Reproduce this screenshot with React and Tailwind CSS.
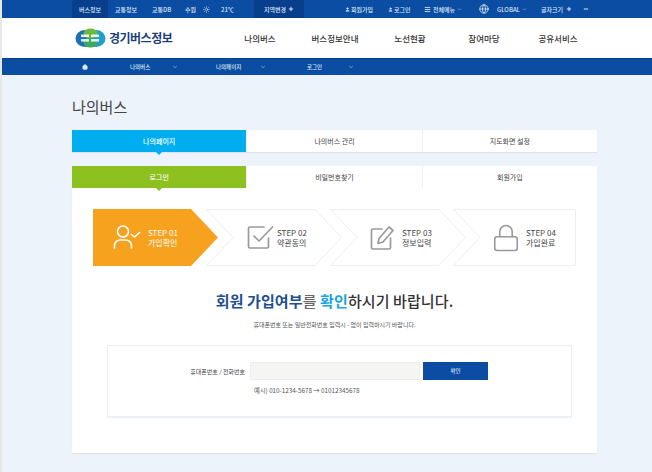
// Gyeonggi bus info - member check page (step 1 of signup)
import { Home, ChevronDown, Sun, User, Lock, Menu, Globe, Plus, Minus } from "lucide-react";

const font = "font-['Noto_Sans_CJK_KR','Noto_Sans',sans-serif]";

const Logo = () => (
  <svg width="31" height="20" viewBox="0 0 31 20" className="shrink-0">
    <ellipse cx="10" cy="10.5" rx="9.5" ry="8.5" fill="#1d6fb5" />
    <ellipse cx="21" cy="10.5" rx="9.5" ry="8.5" fill="#1f9fc9" />
    <ellipse cx="15.5" cy="5.5" rx="7" ry="5" fill="#6fb83f" />
    <ellipse cx="15.5" cy="15" rx="7" ry="4.5" fill="#3aa85e" />
    <rect x="6" y="6.5" width="8" height="2.6" fill="#fff" opacity="0.85" />
    <rect x="16" y="6.5" width="8" height="2.6" fill="#fff" opacity="0.85" />
    <rect x="6" y="11" width="8" height="2.6" fill="#fff" opacity="0.85" />
    <rect x="16" y="11" width="8" height="2.6" fill="#fff" opacity="0.85" />
  </svg>
);

const UserCheck = () => (
  <svg width="28" height="27" viewBox="0 0 28 27" fill="none" stroke="#fff" strokeWidth="1.6" strokeLinecap="round" strokeLinejoin="round">
    <circle cx="10" cy="7.5" r="5.5" />
    <path d="M1.5 24v-2.5c0-3.5 3-5.5 6-5.5h5c3 0 6 2 6 5.5V24" />
    <path d="M18.5 10.5l3 2.5 5-4.5" />
  </svg>
);

const BoxCheck = () => (
  <svg width="27" height="25" viewBox="0 0 27 25" fill="none" stroke="#9a9a9a" strokeWidth="1.7" strokeLinecap="round" strokeLinejoin="round">
    <path d="M17 2H3a1.5 1.5 0 0 0-1.5 1.5v18A1.5 1.5 0 0 0 3 23h17a1.5 1.5 0 0 0 1.5-1.5V13" />
    <path d="M7 11l5 5L25.5 2" />
  </svg>
);

const BoxPen = () => (
  <svg width="25" height="26" viewBox="0 0 25 26" fill="none" stroke="#9a9a9a" strokeWidth="1.7" strokeLinecap="round" strokeLinejoin="round">
    <path d="M12 4H3a1.5 1.5 0 0 0-1.5 1.5v17A1.5 1.5 0 0 0 3 24h16a1.5 1.5 0 0 0 1.5-1.5V13" />
    <path d="M9 13.5L19 2l4 3.5-10 11.5-5 1.5z" />
  </svg>
);

const StepBg = ({ first, last }) => {
  if (first)
    return (
      <svg className="absolute inset-0" width="125" height="57" viewBox="0 0 125 57">
        <path d="M0 0H98L125 28.5 98 57H0z" fill="#f7a21f" />
      </svg>
    );
  return (
    <svg className="absolute inset-0" width={last ? 123 : 136} height="57" viewBox={last ? "0 0 123 57" : "0 0 136 57"} fill="#fff" stroke="#eceff2" strokeWidth="1">
      {last ? (
        <path d="M.5.5H122.5V56.5H.5L27 28.5z" />
      ) : (
        <path d="M.5.5H109L135.5 28.5 109 56.5H.5L27 28.5z" />
      )}
    </svg>
  );
};

const Step = ({ no, label, icon, first, last, className = "", inner }) => (
  <div className={`relative h-[57px] ${first ? "w-[125px]" : last ? "w-[123px]" : "w-[136px]"} ${className}`}>
    <StepBg first={first} last={last} />
    <div className={`relative h-full flex items-center ${inner}`}>
      {icon}
      <div className={`text-[8px] leading-[10px] whitespace-nowrap ${first ? "text-white" : "text-[#444]"}`}>
        <div>STEP {no}</div>
        <div>{label}</div>
      </div>
    </div>
  </div>
);

const TabRow = ({ items, active }) => (
  <div className="flex h-[22px] shadow-[0_1px_1px_#e0e4ea]">
    {items.map((t, i) => (
      <div
        key={t}
        className={`relative flex-1 flex items-center justify-center text-[7px] ${
          i === 0 ? `${active} text-white font-medium` : "bg-white text-[#444] border-l border-[#eef0f3]"
        }`}
      >
        {t}
        {i === 0 && (
          <span className={`absolute top-full left-1/2 -translate-x-1/2 w-0 h-0 border-x-[3px] border-x-transparent border-t-[3px] ${active === "bg-[#00aeef]" ? "border-t-[#00aeef]" : "border-t-[#8dc11f]"}`} />
        )}
      </div>
    ))}
  </div>
);

export default function App() {
  return (
    <div className={`${font} w-[652px] h-[472px] overflow-hidden bg-[#edf3fa] border-l-2 border-[#e8e8e4]`}>
      {/* top utility bar */}
      <div className="h-[18px] bg-[#0a4da2] flex items-center text-[6px] font-medium text-[#dfe8f5] pl-[70px] whitespace-nowrap">
        <div className="w-[36px] h-full bg-[#083f8c] flex items-center justify-center">버스정보</div>
        <span className="ml-[7px] w-[25px]">교통정보</span>
        <span className="ml-[12px] w-[20px]">교통DB</span>
        <span className="ml-[13px] w-[12px]">수원</span>
        <Sun size={7} className="ml-[6px]" />
        <span className="ml-[11px] w-[20px]">21℃</span>
        <div className="ml-[13px] w-[50px] h-full bg-[#083f8c] flex items-center justify-center gap-[2px]">
          지역변경 <Plus size={6} strokeWidth={4} />
        </div>
        <span className="ml-[41px] flex items-center gap-[1px] w-[33px]"><User size={5} fill="currentColor" />회원가입</span>
        <span className="ml-[10px] flex items-center gap-[1px] w-[26px]"><User size={5} fill="currentColor" />로그인</span>
        <span className="ml-[10px] flex items-center gap-[2px] w-[44px]"><Menu size={7} strokeWidth={3} />전체메뉴 <ChevronDown size={5} /></span>
        <Globe size={10} className="ml-[11px]" />
        <span className="ml-[8px] flex items-center gap-[2px] w-[36px]">GLOBAL <ChevronDown size={5} /></span>
        <span className="ml-[8px] flex items-center gap-[3px] w-[42px]">글자크기 <Plus size={6} strokeWidth={4} /></span>
        <Minus size={6} strokeWidth={4} />
      </div>

      {/* main nav */}
      <div className="h-[40px] bg-white flex items-center pl-[73px]">
        <Logo />
        <span className="ml-[3px] w-[65px] text-[12px] font-bold text-[#1c3f7c] tracking-[-0.5px] whitespace-nowrap">경기버스정보</span>
        <nav className="flex text-[8.5px] text-[#333] font-medium whitespace-nowrap">
          <span className="ml-[70px] w-[32px] text-center">나의버스</span>
          <span className="ml-[35px] w-[48px] text-center">버스정보안내</span>
          <span className="ml-[35px] w-[32px] text-center">노선현황</span>
          <span className="ml-[42px] w-[32px] text-center">참여마당</span>
          <span className="ml-[38px] w-[40px] text-center">공유서비스</span>
        </nav>
      </div>

      {/* breadcrumb */}
      <div className="h-[17px] bg-[#0a4da2] border-t border-[#083f8c] flex items-center text-[5.5px] font-medium text-[#dfe8f5] pl-[80px] whitespace-nowrap">
        <Home size={6} fill="currentColor" />
        <span className="ml-[42px] w-[24px]">나의버스</span>
        <ChevronDown size={6} className="ml-[18px]" />
        <span className="ml-[38px] w-[30px]">나의페이지</span>
        <ChevronDown size={6} className="ml-[14px]" />
        <span className="ml-[41px] w-[18px]">로그인</span>
        <ChevronDown size={6} className="ml-[23px]" />
      </div>

      <main className="ml-[70px] w-[525px]">
        <h1 className="mt-[19px] h-[25px] text-[15px] leading-[25px] text-[#444]">나의버스</h1>
        <div className="mt-[11px]">
          <TabRow items={["나의페이지", "나의버스 관리", "지도화면 설정"]} active="bg-[#00aeef]" />
        </div>
        <div className="mt-[14px]">
          <TabRow items={["로그인", "비밀번호찾기", "회원가입"]} active="bg-[#8dc11f]" />
        </div>

        <section className="bg-white h-[265px] pt-[21px] px-[21px] shadow-[0_1px_1px_#e0e4ea]">
          <div className="flex">
            <Step first no="01" label="가입확인" icon={<UserCheck />} inner="pl-[20px] gap-[7px]" />
            <Step className="-ml-[12px]" no="02" label="약관동의" icon={<BoxCheck />} inner="pl-[41px] gap-[3px]" />
            <Step className="-ml-[12px]" no="03" label="정보입력" icon={<BoxPen />} inner="pl-[40px] gap-[7px]" />
            <Step className="-ml-[13px]" last no="04" label="가입완료" icon={<Lock size={30} color="#9a9a9a" strokeWidth={1.3} />} inner="pl-[38px] gap-[5px]" />
          </div>

          <h2 className="mt-[23px] text-center text-[15px] tracking-[0.1px] leading-[24px] font-medium text-[#333]">
            <span className="text-[#1f4f8f] font-bold">회원 가입여부</span>
            <span className="text-[#666]">를</span>{" "}
            <span className="text-[#1ba3e2] font-bold">확인</span>하시기 바랍니다.
          </h2>
          <p className="mt-[7px] text-center text-[6px] leading-[10px] text-[#555]">
            휴대폰번호 또는 일반전화번호 입력시 - 없이 입력하시기 바랍니다.
          </p>

          <div className="mt-[15px] ml-[14px] w-[465px] h-[72px] border border-[#eceff2] pt-[16px] shadow-[0_1px_1px_#eef1f5]">
            <div className="flex items-center h-[18px]">
              <label className="w-[137px] text-right text-[6px] text-[#444]">휴대폰번호 / 전화번호</label>
              <div className="ml-[5px] w-[170px] h-full bg-[#f5f5f3] border border-[#eeeeee]" />
              <button className="ml-[3px] w-[65px] h-full bg-[#0a4da2] text-white text-[5.5px]">확인</button>
            </div>
            <p className="mt-[6px] ml-[146px] text-[6.3px] leading-[10px] text-[#555]">예시) 010-1234-5678 → 01012345678</p>
          </div>
        </section>
      </main>
    </div>
  );
}
